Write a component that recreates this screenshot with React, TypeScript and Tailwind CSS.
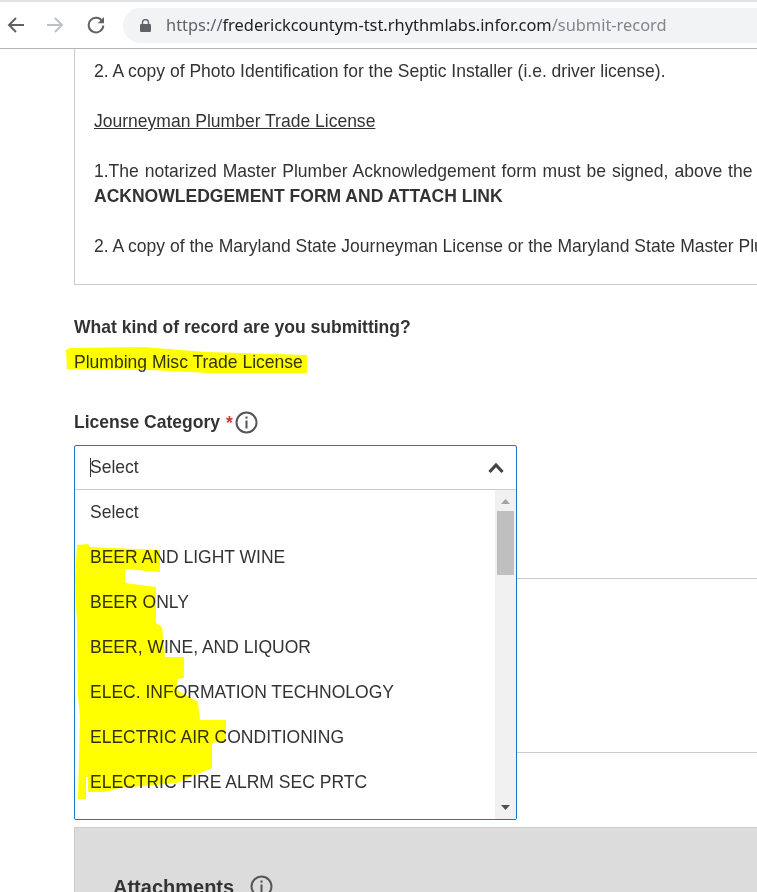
import React from 'react';

const options = [
  'Select',
  'BEER AND LIGHT WINE',
  'BEER ONLY',
  'BEER, WINE, AND LIQUOR',
  'ELEC. INFORMATION TECHNOLOGY',
  'ELECTRIC AIR CONDITIONING',
  'ELECTRIC FIRE ALRM SEC PRTC',
];

const InfoIcon = () => (
  <svg width="23" height="23" viewBox="0 0 23 23" fill="none" className="shrink-0">
    <circle cx="11.5" cy="11.5" r="10" stroke="#555555" strokeWidth="2" />
    <rect x="10.5" y="5.5" width="2" height="2.2" fill="#555555" />
    <rect x="10.5" y="9.5" width="2" height="8" fill="#555555" />
  </svg>
);

const BrowserBar = () => (
  <div className="h-[49px] shrink-0 bg-white border-b border-[#b5b5b5] border-t-2 border-t-[#dee1e6] flex items-center">
    <svg width="18" height="18" viewBox="0 0 18 18" fill="none" className="ml-[7px]" stroke="#5f6368" strokeWidth="2">
      <path d="M17 9H2M9 2L2 9l7 7" />
    </svg>
    <svg width="18" height="18" viewBox="0 0 18 18" fill="none" className="ml-[21px]" stroke="#bdc1c6" strokeWidth="2">
      <path d="M1 9h15M9 2l7 7-7 7" />
    </svg>
    <svg width="18" height="18" viewBox="0 0 18 18" fill="none" className="ml-[23px]">
      <path d="M15.2 5.2A7.3 7.3 0 1 0 16.3 9.5" stroke="#5f6368" strokeWidth="2" />
      <path d="M17 1v6.2h-6.2z" fill="#5f6368" />
    </svg>
    <div className="ml-[18px] flex-1 h-[35px] bg-[#f1f3f4] rounded-l-full flex items-center pl-[17px]">
      <svg width="11" height="13" viewBox="0 0 11 13" className="shrink-0">
        <path d="M2.5 5V3.5a3 3 0 0 1 6 0V5" fill="none" stroke="#5f6368" strokeWidth="1.4" />
        <rect x="0" y="5" width="11" height="8" rx="1.2" fill="#5f6368" />
      </svg>
      <span className="ml-[15px] text-[16.4px] whitespace-nowrap font-['Noto_Sans',sans-serif] text-[#202124]">
        <span className="text-[#5f6368]">https://</span>frederickcountym-tst.rhythmlabs.infor.com<span className="text-[#80868b]">/submit-record</span>
      </span>
    </div>
  </div>
);

const Highlights = () => (
  <svg width="757" height="892" viewBox="0 0 757 892" className="absolute left-0 top-0 z-20 mix-blend-multiply pointer-events-none">
    <path
      fill="#ffff00"
      d="M66 350L70 348L143 347L207 352L307 355L307 373L210 373L150 370L67 369Z"
    />
    <path
      fill="#ffff00"
      d="M77 545L88 544L90 547L160 550L160 572L125 569L125 583L156 587L156 623L162 627L165 657L184 657L184 678L177 679L177 690L198 702L200 720L226 720L226 741L212 743L212 768L177 783L120 788L105 792L88 792L88 777L86 777L86 799L78 799L80 717L78 697L77 625L75 580Z"
    />
  </svg>
);

export default function App() {
  return (
    <div className="relative w-[757px] h-[892px] overflow-hidden bg-white flex flex-col font-['Liberation_Sans',Arial,sans-serif] text-[#333333]">
      <BrowserBar />
      <main className="pl-[74px] w-[900px]">
        <div className="border border-t-0 border-[#cccccc] h-[236px] pl-[19px] pt-[10px] text-[17.53px] leading-[25px] whitespace-nowrap">
          <p>2. A copy of Photo Identification for the Septic Installer (i.e. driver license).</p>
          <p className="mt-[25px] underline">Journeyman Plumber Trade License</p>
          <p className="mt-[25px] [word-spacing:1.1px]">1.The notarized Master Plumber Acknowledgement form must be signed, above the</p>
          <p className="font-bold">ACKNOWLEDGEMENT FORM AND ATTACH LINK</p>
          <p className="mt-[25px]">2. A copy of the Maryland State Journeyman License or the Maryland State Master Plumber</p>
        </div>

        <h3 className="mt-[30px] text-[17.53px] leading-[24px] font-bold">What kind of record are you submitting?</h3>
        <p className="mt-[11px] text-[17.53px] leading-[24px]">Plumbing Misc Trade License</p>

        <div className="mt-[36px] h-[24px] flex items-center text-[17.53px] font-bold">
          License Category
          <span className="ml-[6px] text-[#d9362b] self-start">*</span>
          <span className="ml-[2px]"><InfoIcon /></span>
        </div>

        <div className="relative mt-[11px] h-[382px]">
          <div className="absolute left-0 top-0 z-10 w-[443px] h-[375px] border border-[#1976c9] rounded-[2px] bg-white flex flex-col">
            <div className="h-[44px] shrink-0 border-b border-[#cccccc] flex items-center pl-[15px] pr-[12px]">
              <span className="w-px h-[19px] bg-[#333333]" />
              <span className="-ml-px text-[17.53px] flex-1">Select</span>
              <svg width="16" height="12" viewBox="0 0 16 12" fill="none" stroke="#444444" strokeWidth="3.2">
                <path d="M1.5 10L8 3l6.5 7" />
              </svg>
            </div>
            <div className="flex-1 flex min-h-0">
              <ul className="flex-1 pl-[15px] text-[17.53px] leading-[45px]">
                {options.map((option) => (
                  <li key={option} className="h-[45px] whitespace-nowrap">{option}</li>
                ))}
              </ul>
              <div className="w-[21px] bg-[#f1f1f1] flex flex-col items-center pt-[9px]">
                <svg width="9" height="5" viewBox="0 0 9 5"><path d="M4.5 0L9 5H0z" fill="#a3a3a3" /></svg>
                <div className="mt-[7px] w-[17px] h-[64px] bg-[#bfbfbf]" />
                <div className="flex-1" />
                <svg width="9" height="5" viewBox="0 0 9 5" className="mb-[9px]"><path d="M0 0h9L4.5 5z" fill="#505050" /></svg>
              </div>
            </div>
          </div>
          <div className="h-[134px] border-b border-[#cccccc]" />
          <div className="h-[174px] border-b border-[#cccccc]" />
        </div>

        <section className="bg-[#dcdcdc] border border-[#cccccc] h-[200px] pl-[38px] pt-[47px] flex items-start">
          <h3 className="text-[20px] leading-[24px] font-bold">Attachments</h3>
          <span className="ml-[16px]"><InfoIcon /></span>
        </section>
      </main>
      <Highlights />
    </div>
  );
}
